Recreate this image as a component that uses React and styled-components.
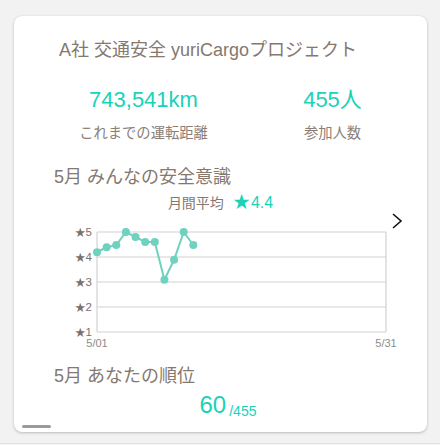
import React from "react";
import styled, { createGlobalStyle } from "styled-components";

const GlobalStyle = createGlobalStyle`
  html, body { margin: 0; padding: 0; background: #f2f2f2; }
  body { font-family: "Liberation Sans", "Noto Sans CJK JP", sans-serif; }
`;

const Page = styled.div`
  height: 444px;
  border-bottom: 1px solid #e2e2e2;
  padding: 16px 0 0 14px;
  box-sizing: border-box;
`;

const Card = styled.div`
  position: relative;
  width: 413px;
  height: 416px;
  background: #fff;
  border-radius: 8px;
  box-shadow: 0 1px 3px rgba(0, 0, 0, 0.22), 0 0 1px rgba(0, 0, 0, 0.12);
  box-sizing: border-box;
  padding-top: 22px;
  display: flex;
  flex-direction: column;
`;

const Title = styled.h1`
  margin: 0;
  padding-left: 45px;
  font-size: 18px;
  line-height: 24px;
  font-weight: 400;
  color: #85786f;
`;

const Stats = styled.div`
  display: grid;
  grid-template-columns: 189px 189px;
  padding-left: 35px;
  margin-top: 23px;
`;

const Stat = styled.div`
  display: flex;
  flex-direction: column;
  align-items: center;
  gap: 8px;
`;

const StatValue = styled.div`
  font-size: 22px;
  line-height: 30px;
  color: #19d2b8;
`;

const StatLabel = styled.div`
  font-size: 14.3px;
  line-height: 20px;
  color: #8a7e76;
`;

const SectionTitle = styled.h2`
  margin: ${(p) => p.$top}px 0 0;
  padding-left: 40px;
  font-size: 18px;
  line-height: 24px;
  font-weight: 400;
  color: #85786f;
`;

const Average = styled.div`
  display: flex;
  justify-content: center;
  align-items: baseline;
  gap: 9px;
  margin-top: 2px;
  height: 20px;
  line-height: 20px;
`;

const AverageLabel = styled.span`
  font-size: 14px;
  color: #85786f;
`;

const AverageValue = styled.span`
  font-size: 16px;
  color: #19d2b8;
`;

const Star = styled.span`
  font-family: "Noto Sans CJK JP", sans-serif;
  font-size: 17px;
  margin-right: 1px;
`;

const ChartWrap = styled.div`
  position: relative;
  height: 140px;
`;

const NextButton = styled.button`
  position: absolute;
  right: 22px;
  top: 1px;
  width: 16px;
  height: 18px;
  padding: 0;
  border: 0;
  background: none;
  display: flex;
  align-items: center;
  justify-content: center;
`;

const Rank = styled.div`
  display: flex;
  justify-content: center;
  align-items: baseline;
  gap: 3px;
  margin-top: 2px;
  padding-left: 15px;
`;

const RankValue = styled.span`
  font-size: 24px;
  line-height: 30px;
  color: #19d2b8;
`;

const RankTotal = styled.span`
  font-size: 14px;
  color: #19d2b8;
  position: relative;
  top: 3px;
`;

const ScrollIndicator = styled.div`
  position: absolute;
  left: 8px;
  bottom: 4px;
  width: 29px;
  height: 3px;
  border-radius: 2px;
  background: #9a9a9a;
`;

const values = [4.19, 4.39, 4.48, 5, 4.8, 4.6, 4.6, 3.09, 3.89, 5, 4.48];
const X0 = 97;
const X1 = 386;
const STEP = (X1 - X0) / 30;
const yOf = (v) => 232 + (5 - v) * 25;

function Chart() {
  const pts = values.map((v, i) => [X0 + i * STEP, yOf(v)]);
  return (
    <svg width="413" height="140" viewBox="14 211 413 140">
      {[5, 4, 3, 2, 1].map((v) => (
        <g key={v}>
          <line x1={X0} x2={X1} y1={yOf(v)} y2={yOf(v)} stroke="#e0e0e0" strokeWidth="1.5" />
          <text
            x="92"
            y={yOf(v) + 3.5}
            textAnchor="end"
            fontSize="11.5"
            fill="#7d7169"
            fontFamily="Liberation Sans, sans-serif"
          >
            <tspan fontFamily="Noto Sans CJK JP, sans-serif" fontSize="10.5">★</tspan>
            {v}
          </text>
        </g>
      ))}
      <line x1={X0} x2={X0} y1="232" y2="332" stroke="#d2d2d2" strokeWidth="1.2" />
      <line x1={X1} x2={X1} y1="232" y2="332" stroke="#d2d2d2" strokeWidth="1.2" />
      <text x={X0} y="347" textAnchor="middle" fontSize="11" fill="#8c8c8c" fontFamily="Liberation Sans, sans-serif">
        5/01
      </text>
      <text x={X1} y="347" textAnchor="middle" fontSize="11" fill="#8c8c8c" fontFamily="Liberation Sans, sans-serif">
        5/31
      </text>
      <polyline
        points={pts.map((p) => p.join(",")).join(" ")}
        fill="none"
        stroke="#6fd2bf"
        strokeWidth="2"
      />
      {pts.map(([x, y], i) => (
        <circle key={i} cx={x} cy={y} r="4" fill="#6fd2bf" />
      ))}
    </svg>
  );
}

export default function App() {
  return (
    <>
      <GlobalStyle />
      <Page>
        <Card>
          <Title>A社 交通安全 yuriCargoプロジェクト</Title>
          <Stats>
            <Stat>
              <StatValue>743,541km</StatValue>
              <StatLabel>これまでの運転距離</StatLabel>
            </Stat>
            <Stat>
              <StatValue>455人</StatValue>
              <StatLabel>参加人数</StatLabel>
            </Stat>
          </Stats>
          <SectionTitle $top={22}>5月 みんなの安全意識</SectionTitle>
          <Average>
            <AverageLabel>月間平均</AverageLabel>
            <AverageValue>
              <Star>★</Star>4.4
            </AverageValue>
          </Average>
          <ChartWrap>
            <Chart />
            <NextButton aria-label="次へ">
              <svg width="12" height="16" viewBox="0 0 12 16">
                <polyline points="2,1 10,8 2,15" fill="none" stroke="#111" strokeWidth="1.6" />
              </svg>
            </NextButton>
          </ChartWrap>
          <SectionTitle $top={13}>5月 あなたの順位</SectionTitle>
          <Rank>
            <RankValue>60</RankValue>
            <RankTotal>/455</RankTotal>
          </Rank>
          <ScrollIndicator />
        </Card>
      </Page>
    </>
  );
}
